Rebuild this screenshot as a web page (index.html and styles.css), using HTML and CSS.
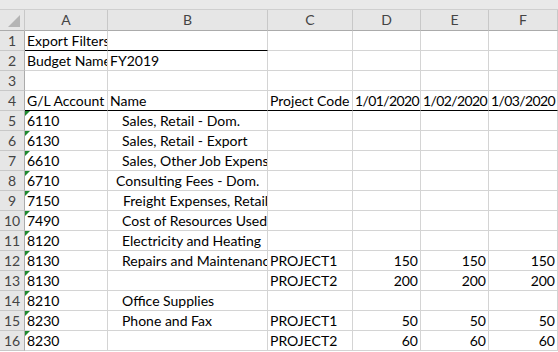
FILE: index.html
```html
<!DOCTYPE html>
<html lang="en">
<head>
  <meta charset="UTF-8" />
  <title>Budget Export</title>
  <link rel="stylesheet" href="styles.css">
</head>
<body>

  <div class="topbar"></div>

  <div class="sheet">
    <!-- column headers -->
    <div class="hd corner"><span class="tri"></span></div>
    <div class="hd">A</div>
    <div class="hd">B</div>
    <div class="hd">C</div>
    <div class="hd">D</div>
    <div class="hd">E</div>
    <div class="hd">F</div>

    <div class="rn">1</div>
    <div class="c bl">Export Filters</div>
    <div class="c bl"></div>
    <div class="c"></div><div class="c"></div><div class="c"></div><div class="c"></div>

    <div class="rn">2</div>
    <div class="c">Budget Name</div>
    <div class="c">FY2019</div>
    <div class="c"></div><div class="c"></div><div class="c"></div><div class="c"></div>

    <div class="rn">3</div>
    <div class="c"></div><div class="c"></div><div class="c"></div><div class="c"></div><div class="c"></div><div class="c"></div>

    <div class="rn">4</div>
    <div class="c bl">G/L Account No.</div>
    <div class="c bl">Name</div>
    <div class="c bl">Project Code</div>
    <div class="c bl date">1/01/2020</div>
    <div class="c bl date">1/02/2020</div>
    <div class="c bl date">1/03/2020</div>

    <div class="rn">5</div>
    <div class="c txt">6110</div>
    <div class="c in3">Sales, Retail - Dom.</div>
    <div class="c"></div><div class="c"></div><div class="c"></div><div class="c"></div>

    <div class="rn">6</div>
    <div class="c txt">6130</div>
    <div class="c in3">Sales, Retail - Export</div>
    <div class="c"></div><div class="c"></div><div class="c"></div><div class="c"></div>

    <div class="rn">7</div>
    <div class="c txt">6610</div>
    <div class="c in3">Sales, Other Job Expenses</div>
    <div class="c"></div><div class="c"></div><div class="c"></div><div class="c"></div>

    <div class="rn">8</div>
    <div class="c txt">6710</div>
    <div class="c in2">Consulting Fees - Dom.</div>
    <div class="c"></div><div class="c"></div><div class="c"></div><div class="c"></div>

    <div class="rn">9</div>
    <div class="c txt">7150</div>
    <div class="c in4">Freight Expenses, Retail</div>
    <div class="c"></div><div class="c"></div><div class="c"></div><div class="c"></div>

    <div class="rn">10</div>
    <div class="c txt">7490</div>
    <div class="c in3">Cost of Resources Used</div>
    <div class="c"></div><div class="c"></div><div class="c"></div><div class="c"></div>

    <div class="rn">11</div>
    <div class="c txt">8120</div>
    <div class="c in3">Electricity and Heating</div>
    <div class="c"></div><div class="c"></div><div class="c"></div><div class="c"></div>

    <div class="rn">12</div>
    <div class="c txt">8130</div>
    <div class="c in3">Repairs and Maintenance</div>
    <div class="c">PROJECT1</div>
    <div class="c num">150</div><div class="c num">150</div><div class="c num">150</div>

    <div class="rn">13</div>
    <div class="c txt">8130</div>
    <div class="c"></div>
    <div class="c">PROJECT2</div>
    <div class="c num">200</div><div class="c num">200</div><div class="c num">200</div>

    <div class="rn">14</div>
    <div class="c txt">8210</div>
    <div class="c in3">Office Supplies</div>
    <div class="c"></div><div class="c"></div><div class="c"></div><div class="c"></div>

    <div class="rn">15</div>
    <div class="c txt">8230</div>
    <div class="c in3">Phone and Fax</div>
    <div class="c">PROJECT1</div>
    <div class="c num">50</div><div class="c num">50</div><div class="c num">50</div>

    <div class="rn">16</div>
    <div class="c txt">8230</div>
    <div class="c"></div>
    <div class="c">PROJECT2</div>
    <div class="c num">60</div><div class="c num">60</div><div class="c num">60</div>
  </div>

</body>
</html>
```

FILE: styles.css
```css
body {
  margin: 0;
  padding: 0;
  background: #ffffff;
  font-family: "Lato", "Liberation Sans", sans-serif;
  font-size: 14px;
  color: #000;
  overflow: hidden;
}

.topbar {
  height: 9px;
  background: #e9e9e9;
  border-bottom: 1px solid #cfcfcf;
}

.sheet {
  display: grid;
  grid-template-columns: 25px 83px 160px 85px 68px 68px 69px;
  grid-auto-rows: 20px;
  grid-template-rows: 21px;
}

.hd {
  background: #e6e6e6;
  color: #444;
  text-align: center;
  line-height: 20px;
  border-right: 1px solid #c8c8c8;
  border-bottom: 1px solid #ababab;
  box-sizing: border-box;
}

.corner {
  position: relative;
}

.tri {
  position: absolute;
  right: 4px;
  bottom: 3px;
  width: 0;
  height: 0;
  border-left: 12px solid transparent;
  border-bottom: 12px solid #b4b4b4;
}

.rn {
  background: #e6e6e6;
  color: #444;
  text-align: center;
  line-height: 20px;
  border-right: 1px solid #ababab;
  border-bottom: 1px solid #c8c8c8;
  box-sizing: border-box;
}

.c {
  position: relative;
  box-sizing: border-box;
  border-right: 1px solid #d4d4d4;
  border-bottom: 1px solid #d4d4d4;
  padding: 0 2px;
  line-height: 20px;
  white-space: pre;
  overflow: hidden;
}

.c.bl {
  border-bottom: 1px solid #000;
}

.c.num {
  text-align: right;
}

.c.date {
  text-align: right;
  letter-spacing: -0.6px;
  padding-right: 3px;
}

.in2 { padding-left: 8px; }
.in3 { padding-left: 14px; }
.in4 { padding-left: 15px; }

/* number stored as text marker */
.txt::before {
  content: "";
  position: absolute;
  left: 0;
  top: 0;
  width: 0;
  height: 0;
  border-top: 5px solid #1e8a2e;
  border-right: 5px solid transparent;
}
```
